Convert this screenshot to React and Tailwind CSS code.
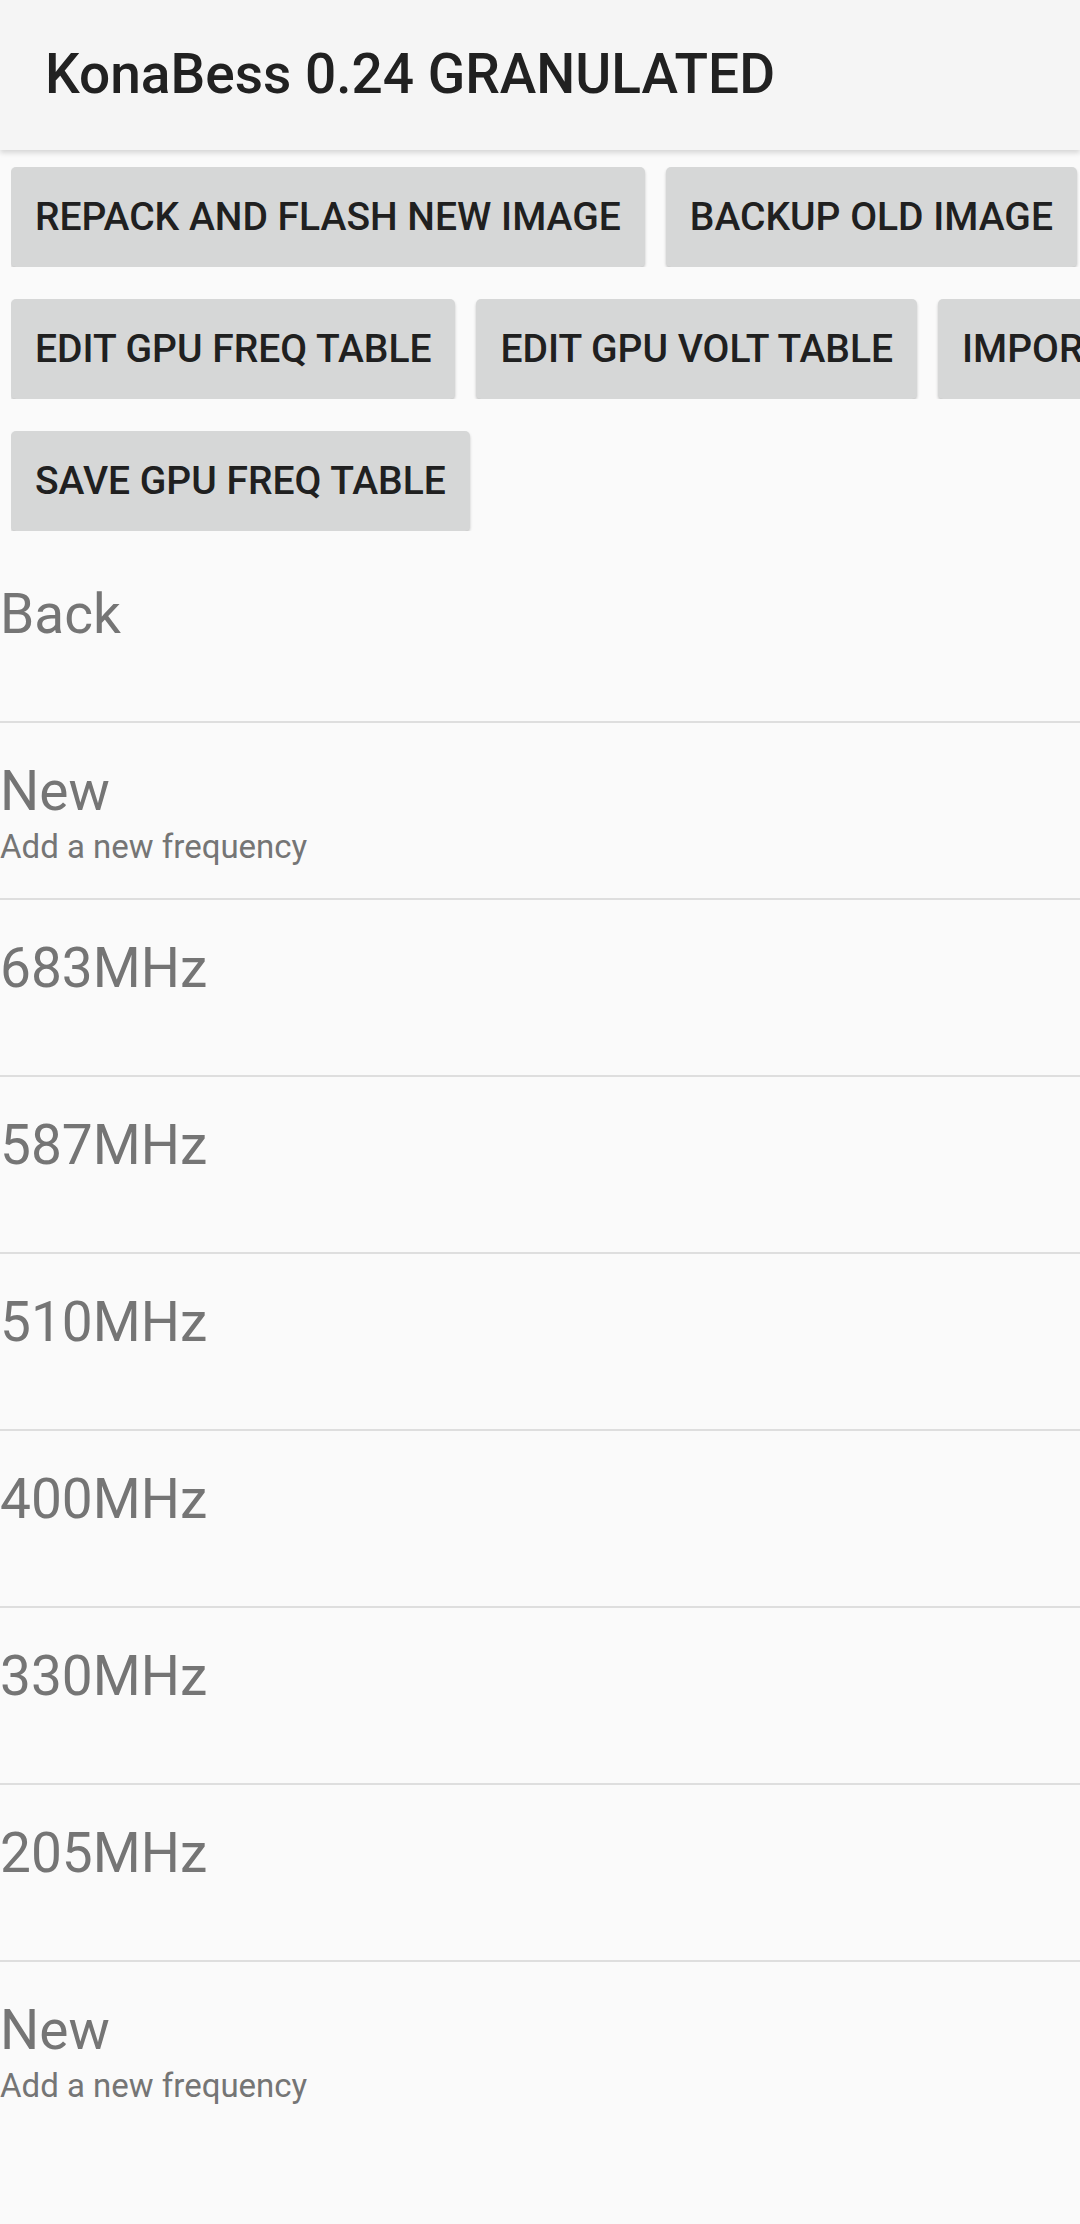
import React from 'react'

const buttonRows = [
  ['Repack and flash new image', 'Backup old image'],
  ['Edit GPU freq table', 'Edit GPU volt table', 'Import from file'],
  ['Save GPU freq table']
]

const items = [
  { title: 'Back' },
  { title: 'New', subtitle: 'Add a new frequency' },
  { title: '683MHz' },
  { title: '587MHz' },
  { title: '510MHz' },
  { title: '400MHz' },
  { title: '330MHz' },
  { title: '205MHz' },
  { title: 'New', subtitle: 'Add a new frequency' }
]

const ActionButton = ({ label }) => (
  <button className="shrink-0 h-[100px] px-[24px] rounded-[5px] bg-[#d6d7d7] text-[#202020] text-[39px] font-medium uppercase whitespace-nowrap shadow-[0_2px_3px_rgba(0,0,0,0.22)]">
    {label}
  </button>
)

const App = () => {
  return (
    <div
      className="w-[1080px] h-[2224px] overflow-hidden bg-[#fafafa]"
      style={{ fontFamily: 'Roboto, "Noto Sans", sans-serif' }}
    >
      <header className="relative z-10 h-[150px] bg-[#f5f5f5] flex items-center pl-[45px] shadow-[0_3px_5px_rgba(0,0,0,0.14)]">
        <h1 className="text-[55px] font-medium text-[#212121] leading-none -mt-[2px]">
          KonaBess 0.24 GRANULATED
        </h1>
      </header>

      <div className="pt-[17px] pl-[11px] flex flex-col gap-[32px]">
        {buttonRows.map((row, i) => (
          <div key={i} className="flex gap-[21px] overflow-hidden">
            {row.map(label => (
              <ActionButton key={label} label={label} />
            ))}
          </div>
        ))}
      </div>

      <ul className="mt-[15px]">
        {items.map((item, i) => (
          <li
            key={i}
            className={`h-[177px] pt-[34px] text-[#757575] ${i < items.length - 1 ? 'border-b-2 border-[#dedede]' : ''}`}
          >
            <div className="text-[55px] leading-[69px]">{item.title}</div>
            {item.subtitle && (
              <div className="text-[33px] leading-[39px] mt-[1px]">{item.subtitle}</div>
            )}
          </li>
        ))}
      </ul>
    </div>
  )
}

export default App
